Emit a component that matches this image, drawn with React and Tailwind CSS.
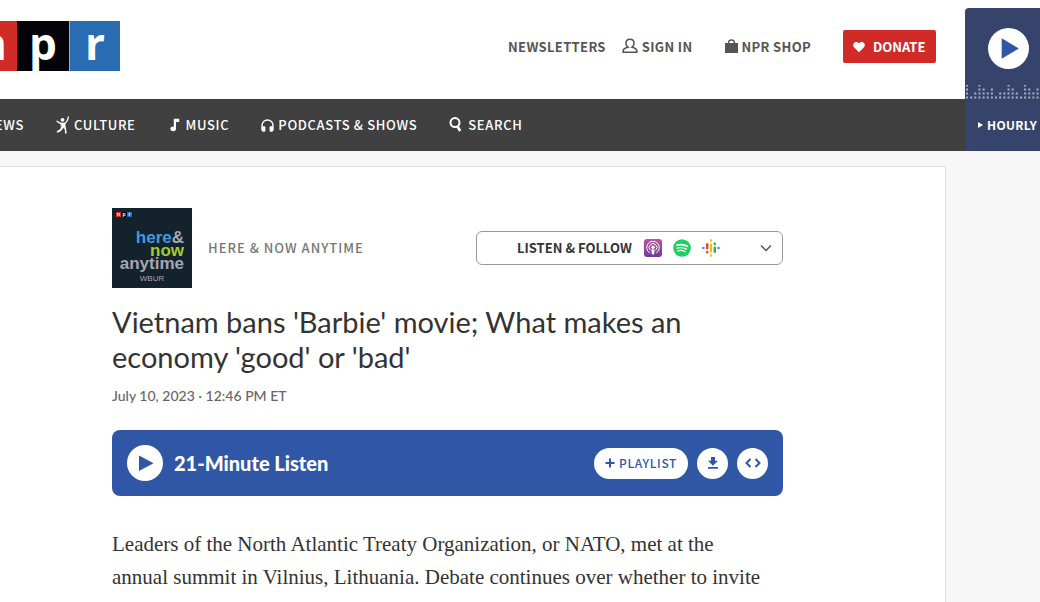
import React from 'react';

function Equalizer() {
  const heights = [4, 1, 2, 4, 3, 2, 3, 1, 2, 2, 4, 3, 2, 1, 4, 3, 2, 3];
  return (
    <svg className="block h-3.5 w-full" aria-hidden="true">
      {heights.map((count, col) =>
        Array.from({ length: count }, (_, row) => (
          <rect key={`${col}-${row}`} x={1 + col * 4.15} y={11.5 - row * 4} width="2" height="2" fill="#a9b0c4" />
        ))
      )}
    </svg>
  );
}

function HourlyPlayer() {
  return (
    <aside className="mt-2 flex w-[75px] shrink-0 flex-col overflow-hidden rounded-tl bg-[#36446b] text-white">
      <button aria-label="Play live radio" className="mt-5 ml-[23px] size-[41px] shrink-0 rounded-full bg-white">
        <svg viewBox="0 0 42 42" className="size-full" aria-hidden="true">
          <path d="M14 10.500v21L31.500 21z" fill="#2f57a5" />
        </svg>
      </button>
      <div className="mt-4">
        <Equalizer />
      </div>
      <a href="#hourly" className="flex h-[52px] items-center gap-1 pl-3 text-xs leading-4 font-bold tracking-wide whitespace-nowrap">
        <svg viewBox="0 0 6 6" className="size-1.5 shrink-0" aria-hidden="true">
          <path d="M1 0v6L6 3z" fill="#fff" />
        </svg>
        HOURLY NEWS
      </a>
    </aside>
  );
}

function Logo() {
  return (
    <a href="#home" aria-label="NPR home" className="flex font-['Open_Sans',sans-serif] text-[44px] leading-[44px] font-bold text-white">
      <span className="flex h-[50px] w-[17px] justify-end overflow-hidden bg-[#d02b27] pr-2.5">n</span>
      <span className="h-[50px] w-[52px] bg-[#05030a] text-center">p</span>
      <span className="h-[50px] w-[51px] border-l border-[#8db2da] bg-[#2a6cb2] text-center">r</span>
    </a>
  );
}

function TopBar() {
  return (
    <div className="flex h-[99px] items-start justify-between pr-[29px]">
      <div className="mt-[21px]">
        <Logo />
      </div>
      <div className="mt-[30px] flex h-[33px] items-center text-[13px] leading-5 font-bold tracking-wide whitespace-nowrap text-[#555]">
        <a href="#newsletters">NEWSLETTERS</a>
        <a href="#signin" className="ml-4 flex items-center gap-1">
          <svg viewBox="0 0 16 16" className="mb-0.5 size-4" fill="none" stroke="#555" strokeWidth="1.6" aria-hidden="true">
            <path d="M8 1.200c-2.400 0-4 1.800-4 4 0 1.700.8 3.200 1.900 4C3.200 9.800 1.200 11 1.200 13v1.200h13.600V13c0-2-2-3.200-4.700-3.800 1.100-.8 1.900-2.300 1.900-4 0-2.200-1.600-4-4-4z" />
          </svg>
          SIGN IN
        </a>
        <a href="#shop" className="ml-8 flex items-center gap-1">
          <svg viewBox="0 0 13 14" className="mb-0.5 h-3.5 w-[13px]" aria-hidden="true">
            <path d="M0 4h13v10H0z" fill="#555" />
            <path d="M3.500 6V4a3 3 0 0 1 6 0v2" fill="none" stroke="#555" strokeWidth="1.400" />
          </svg>
          NPR SHOP
        </a>
        <a href="#donate" className="ml-8 flex h-[33px] w-[93px] items-center gap-2 rounded-xs bg-[#d02b27] pl-2.5 tracking-normal text-white">
          <svg viewBox="0 0 12 12" className="size-3" fill="#fff" aria-hidden="true">
            <path d="M6 11.300 1 6.200C-.6 4.300.3 1 3.200 1 4.500 1 5.500 1.700 6 2.600 6.500 1.700 7.500 1 8.800 1c2.900 0 3.800 3.300 2.200 5.200z" />
          </svg>
          DONATE
        </a>
      </div>
    </div>
  );
}

function CultureIcon() {
  return (
    <svg viewBox="0 0 14 18" className="h-[18px] w-3.5" fill="none" stroke="#fff" strokeLinecap="round" aria-hidden="true">
      <circle cx="6.500" cy="3.800" r="1.900" fill="#fff" stroke="none" />
      <path d="M12.200 1c0 3-1.500 5-3.500 6.500M1 5.200c1.500 1.500 3.500 2.300 5.500 2.600" strokeWidth="1.300" />
      <path d="M5 7.200 9 7l.3 4.500-3.500.8z" fill="#fff" strokeWidth=".6" />
      <path d="M6 11.500c-.5 2.200-2 3.500-4.500 4.300M8.500 11c1 1.500 1.500 3.500 1.300 6" strokeWidth="1.600" />
    </svg>
  );
}

function MusicIcon() {
  return (
    <svg viewBox="0 0 10 14" className="h-3.5 w-2.5" fill="#fff" aria-hidden="true">
      <path d="M3.800.8h5.400v3.200H6v7.200H3.800z" />
      <ellipse cx="3.200" cy="10.800" rx="2.800" ry="2.400" />
    </svg>
  );
}

function HeadphonesIcon() {
  return (
    <svg viewBox="0 0 13 13" className="size-[13px]" aria-hidden="true">
      <path d="M1 11.500V6.500a5.500 5.500 0 0 1 11 0v5" fill="none" stroke="#fff" strokeWidth="1.400" />
      <rect x="1" y="7.200" width="3.400" height="5.500" rx="1.200" fill="#fff" />
      <rect x="8.600" y="7.200" width="3.400" height="5.500" rx="1.200" fill="#fff" />
    </svg>
  );
}

function SearchIcon() {
  return (
    <svg viewBox="0 0 13 15" className="mb-0.5 h-[15px] w-[13px]" fill="none" stroke="#fff" aria-hidden="true">
      <circle cx="6" cy="5.600" r="4.500" strokeWidth="2" />
      <path d="m8.500 9.500 2.700 4.500" strokeWidth="2.600" />
    </svg>
  );
}

function MainNav() {
  return (
    <nav className="flex h-[52px] items-center bg-[#404040] text-[13px] leading-5 font-medium tracking-wider whitespace-nowrap text-white">
      <a href="#news" className="flex w-6 justify-end overflow-hidden">NEWS</a>
      <a href="#culture" className="ml-8 flex items-center gap-1"><CultureIcon />CULTURE</a>
      <a href="#music" className="ml-[34px] flex items-center gap-1.5"><MusicIcon />MUSIC</a>
      <a href="#podcasts" className="ml-8 flex items-center gap-1"><HeadphonesIcon />PODCASTS &amp; SHOWS</a>
      <a href="#search" className="ml-8 flex items-center gap-1.5"><SearchIcon />SEARCH</a>
    </nav>
  );
}

function CoverArt() {
  return (
    <a href="#show" className="flex size-20 flex-col bg-[#14222b] pt-1 pr-2 font-['Liberation_Sans',sans-serif] text-[17px] leading-[13px] font-bold">
      <span className="ml-1 flex text-[5px] leading-[5px] text-white">
        <span className="w-[5px] bg-[#d02b27] text-center">n</span>
        <span className="w-1.5 bg-black text-center">p</span>
        <span className="w-[5px] bg-[#2a6cb2] text-center">r</span>
      </span>
      <span className="mt-3.5 text-right text-[#3f9bdc]">here<span className="text-[#a4a6b4]">&amp;</span></span>
      <span className="text-right text-[#a6cb32]">now</span>
      <span className="text-right text-[#a4a6b4]">anytime</span>
      <span className="mt-1 ml-2 text-center text-[8px] leading-[10px] font-normal text-[#a4a6b4]">WBUR</span>
    </a>
  );
}

function PodcastsIcon() {
  return (
    <svg viewBox="0 0 18 18" className="size-[18px]" aria-hidden="true">
      <defs>
        <linearGradient id="podcasts" x2="0" y2="1">
          <stop stopColor="#b9569f" />
          <stop offset="1" stopColor="#6f3b94" />
        </linearGradient>
      </defs>
      <rect width="18" height="18" rx="3" fill="url(#podcasts)" />
      <g fill="none" stroke="#fff">
        <path d="M5.800 14a6.300 6.300 0 1 1 6.400 0" strokeWidth="1" />
        <path d="M6.300 11.300a3.900 3.900 0 1 1 5.400 0" strokeWidth="1" />
      </g>
      <circle cx="9" cy="8.300" r="1.700" fill="#fff" />
      <path d="M7.300 10.800c.6-.5 2.800-.5 3.400 0l-.6 4.200c-.2.800-2 .8-2.200 0z" fill="#fff" />
    </svg>
  );
}

function SpotifyIcon() {
  return (
    <svg viewBox="0 0 18 18" className="size-[18px]" fill="none" stroke="#fff" strokeLinecap="round" aria-hidden="true">
      <circle cx="9" cy="9" r="8.800" fill="#1ed05f" stroke="none" />
      <path d="M3.700 6.200c3.500-1 7.500-.7 10.800 1.100" strokeWidth="1.700" />
      <path d="M4.200 9.100c3-.8 6.300-.5 9.200 1.100" strokeWidth="1.400" />
      <path d="M4.600 11.800c2.600-.6 5.300-.4 7.700 1" strokeWidth="1.200" />
    </svg>
  );
}

function GooglePodcastsIcon() {
  return (
    <svg viewBox="0 0 18 18" className="size-[18px]" fill="none" strokeWidth="2.4" strokeLinecap="round" aria-hidden="true">
      <path d="M1.400 9h.1M16.500 9h.1" stroke="#4285f4" />
      <path d="M5.200 5.200v4M5.200 13v.2" stroke="#ea4335" />
      <path d="M12.800 4.800v.2M12.800 8.800v4" stroke="#34a853" />
      <path d="M9 1.400v.1M9 5.600v6.800M9 16.500v.1" stroke="#fbbc04" />
    </svg>
  );
}

function PodcastHeader() {
  return (
    <div className="flex items-center">
      <CoverArt />
      <a href="#show" className="ml-4 text-[13px] leading-5 font-medium tracking-[1px] text-[#767676]">HERE &amp; NOW ANYTIME</a>
      <button className="ml-auto flex h-[34px] w-[307px] items-center rounded-md border border-[#999] pr-2.5 pl-10 text-[13px] leading-5 font-bold whitespace-nowrap text-[#333]">
        LISTEN &amp; FOLLOW
        <span className="ml-3 flex gap-[11px]">
          <PodcastsIcon />
          <SpotifyIcon />
          <GooglePodcastsIcon />
        </span>
        <svg viewBox="0 0 12 8" className="ml-auto h-2 w-3" fill="none" stroke="#555" strokeWidth="1.500" aria-hidden="true">
          <path d="m1 1.500 5 5 5-5" />
        </svg>
      </button>
    </div>
  );
}

function AudioPlayer() {
  return (
    <div className="mt-6 flex h-[66px] items-center rounded-lg bg-[#2f57a5] px-[15px]">
      <button className="flex items-center gap-[11px] font-['Lato',sans-serif] text-xl font-black text-white">
        <svg viewBox="0 0 36 36" className="size-9" aria-hidden="true">
          <circle cx="18" cy="18" r="18" fill="#fff" />
          <path d="M12 10.500v15.500l14.500-7.800z" fill="#2f57a5" />
        </svg>
        21-Minute Listen
      </button>
      <div className="ml-auto flex gap-[9px] text-[#2f57a5]">
        <button className="flex h-[31px] w-[94px] items-center justify-center gap-1 rounded-full bg-white text-xs leading-4 font-medium tracking-wider">
          <svg viewBox="0 0 10 10" className="size-2.5" stroke="currentColor" strokeWidth="2" aria-hidden="true">
            <path d="M5 .5v9M.5 5h9" />
          </svg>
          PLAYLIST
        </button>
        <button aria-label="Download" className="flex size-[31px] items-center justify-center rounded-full bg-white">
          <svg viewBox="0 0 12 12" className="size-3" fill="currentColor" aria-hidden="true">
            <path d="M4 0h4v3.700h3L6 8.700 1 3.700h3zM1 10h10v1.700H1z" />
          </svg>
        </button>
        <button aria-label="Embed" className="flex size-[31px] items-center justify-center rounded-full bg-white">
          <svg viewBox="0 0 16 10" className="h-2.5 w-4" fill="none" stroke="currentColor" strokeWidth="2" aria-hidden="true">
            <path d="M5.500 1 1.500 5l4 4M10.500 1l4 4-4 4" />
          </svg>
        </button>
      </div>
    </div>
  );
}

function App() {
  return (
    <div className="flex h-screen flex-col overflow-hidden bg-[#f7f7f7] font-['Noto_Sans_CJK_SC',sans-serif]">
      <header className="flex shrink-0 bg-white">
        <div className="min-w-0 flex-1">
          <TopBar />
          <MainNav />
        </div>
        <HourlyPlayer />
      </header>

      <main className="mt-[15px] mr-[94px] flex-1 rounded-tr-xs border-t border-r border-[#dedede] bg-white pt-[41px] pr-[162px] pl-28">
        <PodcastHeader />
        <h1 className="mt-4 font-['Lato',sans-serif] text-[29px] leading-[35px] text-[#333]">
          Vietnam bans 'Barbie' movie; What makes an economy 'good' or 'bad'
        </h1>
        <p className="mt-3 font-['Lato',sans-serif] text-sm leading-5 font-medium text-[#666]">July 10, 2023 · 12:46 PM ET</p>
        <AudioPlayer />
        <p className="mt-8 pr-4 font-['Liberation_Serif',serif] text-[21px] leading-[33px] text-[#333]">
          Leaders of the North Atlantic Treaty Organization, or NATO, met at the annual summit in Vilnius, Lithuania. Debate continues over whether to invite Ukraine to join the alliance and Russia's war there.
        </p>
      </main>
    </div>
  );
}

export default App;
